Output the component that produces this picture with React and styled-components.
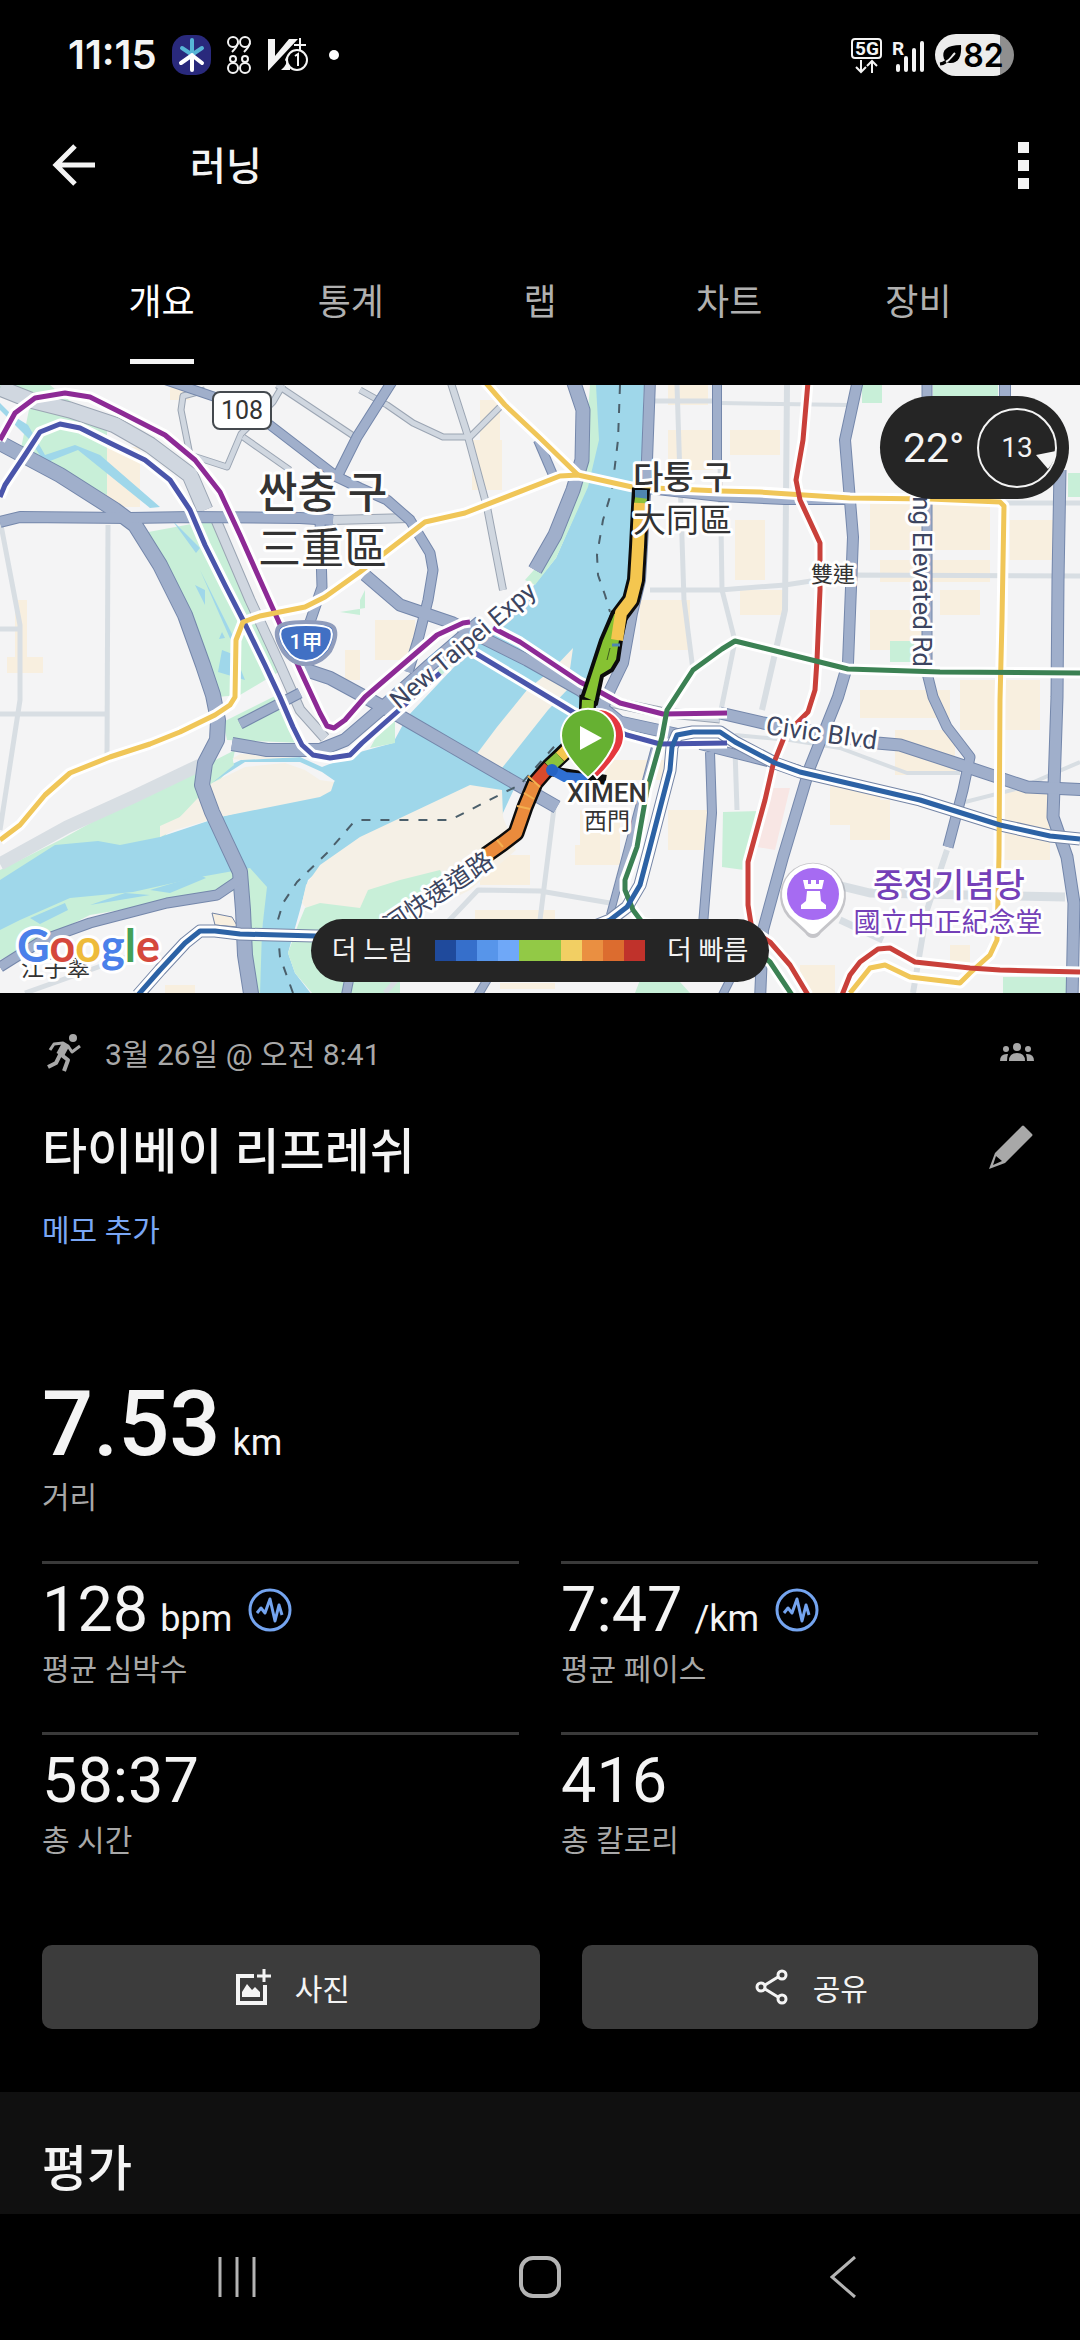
import React, { useState } from 'react';
import styled, { createGlobalStyle } from 'styled-components';

const GlobalStyle = createGlobalStyle`
  * {
    box-sizing: border-box;
  }
  body {
    margin: 0;
    background-color: #000;
    color: #f4f4f4;
    font-family: Roboto, 'Noto Sans CJK KR', sans-serif;
  }
  button {
    border: 0;
    padding: 0;
    background: none;
    color: inherit;
    font: inherit;
    cursor: pointer;
  }
  svg {
    display: block;
    flex-shrink: 0;
  }
`;

const Page = styled.div`
  display: flex;
  flex-direction: column;
  min-height: 100vh;
`;

const StatusBar = styled.div`
  display: flex;
  align-items: center;
  justify-content: space-between;
  height: 110px;
  padding: 0 66px 0 68px;
`;
const StatusGroup = styled.div`
  display: flex;
  align-items: center;
  gap: ${({ $gap }) => $gap}px;
`;
const Clock = styled.span`
  font-family: Inter, sans-serif;
  font-size: 40px;
  font-weight: 600;
  line-height: 42px;
`;
const Battery = styled.div`
  display: flex;
  align-items: center;
  justify-content: center;
  width: 79px;
  height: 42px;
  padding-right: 6px;
  border-radius: 21px;
  color: #000;
  background: linear-gradient(to right, #ececec 82%, #8f8f8f 82%);
  font-family: Inter, sans-serif;
  font-size: 32px;
  font-weight: 600;
`;

const AppBar = styled.header`
  display: flex;
  align-items: center;
  height: 110px;
  padding: 0 38px;
`;
const IconButton = styled.button`
  display: flex;
  align-items: center;
  justify-content: center;
  min-width: 38px;
  height: 72px;
`;
const AppTitle = styled.h1`
  flex: 1;
  margin: 4px 0 0 94px;
  font-size: 39px;
  font-weight: 500;
  line-height: 56px;
`;
const BackButton = styled(IconButton)`
  margin-left: 12px;
`;

const Tabs = styled.nav`
  display: grid;
  grid-template-columns: repeat(5, 1fr);
  height: 165px;
  padding: 0 67px;
`;
const Tab = styled.button`
  display: flex;
  flex-direction: column;
  align-items: center;
  justify-content: flex-end;
  gap: 28px;
  padding-bottom: 21px;
  font-size: 36px;
  line-height: 56px;
  color: ${({ $active }) => ($active ? '#fff' : '#b0b0b0')};
  &::after {
    content: '';
    width: 64px;
    height: 5px;
    background-color: ${({ $active }) => ($active ? '#f4f4f4' : 'transparent')};
  }
`;

const MapArea = styled.section`
  position: relative;
  height: 608px;
  overflow: hidden;
  background-color: #f4f4f5;
`;
const Canvas = styled.svg`
  width: 100%;
  height: 100%;
`;
const MapText = styled.text`
  font-family: Roboto, 'Noto Sans CJK TC', 'Noto Sans CJK KR', sans-serif;
  font-size: ${({ $size }) => $size}px;
  font-weight: ${({ $weight }) => $weight || 400};
  fill: ${({ $color }) => $color || '#333'};
  stroke: #fff;
  stroke-width: 6px;
  stroke-linejoin: round;
  paint-order: stroke;
`;
const PlainMapText = styled(MapText)`
  stroke: none;
`;
const Logo = styled(MapText)`
  font-family: Lato, sans-serif;
`;
const WeatherPill = styled.div`
  position: absolute;
  top: 11px;
  right: 11px;
  display: flex;
  align-items: center;
  justify-content: space-between;
  width: 189px;
  height: 103px;
  padding: 0 11px 0 23px;
  border-radius: 52px;
  background-color: #252525;
  font-size: 41px;
`;
const Wind = styled.div`
  display: grid;
  place-items: center;
  & > * {
    grid-area: 1 / 1;
  }
  font-size: 28px;
`;
const Legend = styled.div`
  position: absolute;
  bottom: 11px;
  left: 50%;
  transform: translateX(-50%);
  display: flex;
  align-items: center;
  justify-content: center;
  gap: 22px;
  width: 458px;
  height: 63px;
  border-radius: 32px;
  background-color: #252525;
  font-size: 27px;
  line-height: 40px;
  white-space: nowrap;
`;
const Scale = styled.div`
  display: flex;
  width: 210px;
  height: 21px;
`;
const Swatch = styled.span`
  flex: 1;
  background-color: ${({ $color }) => $color};
`;

const Summary = styled.main`
  padding: 0 42px;
`;
const MetaRow = styled.div`
  display: flex;
  align-items: center;
  justify-content: space-between;
  height: 118px;
  padding: 0 4px 0 0;
  color: #a8a8a8;
`;
const When = styled.div`
  display: flex;
  align-items: center;
  gap: 15px;
  font-size: 30px;
`;
const TitleRow = styled.div`
  display: flex;
  align-items: center;
  justify-content: space-between;
  height: 84px;
  padding: 0 4px 0 0;
`;
const SectionTitle = styled.h2`
  margin: 0;
  font-size: 49px;
  font-weight: 500;
  line-height: 72px;
`;
const MemoButton = styled.button`
  display: block;
  margin-top: 14px;
  font-size: 30px;
  line-height: 44px;
  color: #7aa7f5;
`;
const Distance = styled.div`
  height: 224px;
  margin-top: 84px;
  padding-top: 33px;
`;
const BigValue = styled.div`
  font-size: 90px;
  font-weight: 500;
  line-height: 110px;
`;
const Unit = styled.span`
  margin-left: 12px;
  font-size: 36px;
  font-weight: 400;
  line-height: 36px;
`;
const Label = styled.div`
  font-size: 30px;
  line-height: 36px;
  color: #a8a8a8;
`;
const Stats = styled.div`
  display: grid;
  grid-template-columns: 1fr 1fr;
  column-gap: 42px;
`;
const Stat = styled.div`
  height: 171px;
  padding-top: 10px;
  border-top: 3px solid #3a3a3a;
`;
const ValueRow = styled.div`
  display: flex;
  align-items: center;
  gap: 16px;
  height: 72px;
  margin-bottom: 6px;
`;
const Value = styled.div`
  font-size: 63px;
  line-height: 72px;
`;
const Actions = styled.div`
  display: grid;
  grid-template-columns: 12fr 11fr;
  gap: 42px;
  margin-top: 42px;
`;
const ActionButton = styled.button`
  display: flex;
  align-items: center;
  justify-content: center;
  gap: 23px;
  height: 84px;
  padding-left: 2px;
  border-radius: 10px;
  background-color: #3c3c3c;
  font-size: 30px;
`;
const Rating = styled.section`
  height: 122px;
  margin-top: 63px;
  padding: 42px 42px 0;
  background-color: #101010;
`;
const SystemNav = styled.nav`
  display: grid;
  grid-template-columns: repeat(3, 303px);
  justify-content: center;
  align-items: center;
  height: 126px;
  color: #b4b4b4;
`;

// [points, width]
const majorRoads = [
  ['0,443 60,475 115,510 135,525 160,565 185,615 203,665 213,695 218,720 217,740 205,763 202,785 212,812 225,840 240,872 243,910 245,955 252,1000', 14],
  ['0,522 20,517 130,518 190,517 300,518 333,520', 10],
  ['165,380 215,397 270,425 335,475 362,490', 8],
  ['393,380 357,437 337,477 360,488 387,500 410,520 430,553 433,570 428,600 418,640 408,672', 9],
  ['320,520 322,587 309,625', 9],
  ['365,575 400,605 453,623 527,660 580,690 620,722 680,735 720,746', 11],
  ['300,668 330,678 365,697 403,718 453,747 510,780 557,807', 12],
  ['573,380 583,410 582,460 573,490 555,535 535,570', 13],
  ['480,622 430,665 380,710 345,740 320,750 267,750 232,744', 12],
  ['240,724 300,693', 9],
  ['650,380 647,460 640,580 632,613 623,663 610,690 600,715', 10],
  ['717,380 717,460', 8],
  ['858,380 845,440 853,537 848,663 838,697 810,767 783,857 763,930 760,1000', 10],
  ['927,380 927,673 933,697 947,727 970,757 963,790 948,847', 9],
  ['1005,380 1005,440', 10],
  ['1060,470 1058,580 1057,697 1053,817 1067,857 1074,903 1072,1000', 11],
  ['630,487 720,497 785,500 850,500', 8],
  ['720,713 763,723 877,743 900,745 967,767 1027,787 1090,790', 11],
  ['700,745 800,770', 8],
  ['0,967 43,940 90,923 167,903 217,895 242,878', 9],
  ['710,752 712,813 703,925', 8],
  ['538,440 553,475', 8],
  ['655,747 610,915', 6],
  ['490,975 475,1000', 7],
  ['350,975 345,1000', 8],
  ['735,970 720,1000', 7],
];
const minorRoads = [
  ['0,388 30,400 70,410 115,425 150,445 190,475 205,510', 15],
  ['216,520 250,600 280,665 300,710 325,738', 9],
  ['205,390 183,396 181,410 190,455 227,467 241,434 273,402 283,385', 5],
  ['243,437 290,470', 5],
  ['277,385 355,437', 5],
  ['450,380 467,433 487,507 503,590', 6],
  ['360,390 387,405 413,423 443,437 470,437 500,407', 5],
  ['333,520 410,518', 8],
  ['600,700 660,712 720,718', 9],
];
const streets = [
  ['0,864 67,827 133,797 200,765', 13],
  ['0,520 20,625 20,700 0,830', 5],
  ['108,525 107,755', 5],
  ['0,629 20,629', 5],
  ['0,714 107,714', 5],
  ['677,385 684,600 693,670', 5],
  ['787,385 785,610 762,710', 6],
  ['654,401 712,401', 5],
  ['720,403 850,405', 4],
  ['650,590 720,590 785,585 850,575 1080,576', 5],
  ['1000,503 1080,503', 5],
  ['720,460 722,590 735,641 720,715', 5],
  ['555,800 540,920', 5],
  ['440,930 478,890 540,891 610,903', 5],
  ['735,750 737,810', 5],
  ['837,885 870,893 1065,897', 9],
  ['947,850 927,910 913,993', 6],
  ['840,920 883,940', 7],
  ['965,802 1020,788 1080,762', 4],
  ['735,735 790,740 840,748 907,773 960,773', 4],
  ['25,993 160,945', 5],
  ['385,993 405,970', 5],
];
const transit = [
  ['0,440 15,413 35,398 65,393 90,397 120,412 165,435 195,460 220,492 240,535 260,580 278,620 300,670 320,713 327,726 334,728 345,720 365,697 437,635 463,623 470,622', '#8d2a96'],
  ['493,628 520,642 580,682 600,692 620,703 663,714 727,713', '#8d2a96'],
  ['0,497 5,485 25,455 40,432 60,424 80,428 110,443 145,460 170,480 190,510 205,545 225,585 243,620 265,665 280,697 293,727 302,745 313,755 330,758 350,755 362,743 397,712 440,673', '#4a55ab'],
  ['475,653 520,680 573,712 627,735 660,744 727,743', '#4a55ab'],
  ['0,840 20,825 45,795 70,773 110,757 150,744 180,732 215,715 230,705 235,697 236,640 243,622 260,616 305,607 325,597 360,572 425,522 465,513 560,476 578,475 632,487 720,491 760,492 850,498 930,499 1000,502 1004,506 1002,620 1000,700 999,855 997,940 990,955 970,973 960,983 910,977 885,965 870,968 850,993', '#f0c658'],
  ['485,382 505,405 540,438 578,475', '#f0c658'],
  ['808,382 803,440 796,480 800,500 820,543 820,590 817,660 815,690 808,712 785,735 773,765 765,800 748,862 748,905 752,930 770,942 790,965 808,995', '#c9403a'],
  ['842,995 850,975 860,962 878,949 890,948 915,962 970,968 1000,970 1080,972', '#c9403a'],
  ['1080,673 940,672 848,669 735,641 722,649 693,670 680,690 667,710 662,737 647,790 637,847 625,880 625,890 633,910 642,922 700,935 750,945 770,962 792,995', '#3b8153'],
  ['138,995 160,970 185,943 200,931 215,931 240,934 315,936 560,940 610,920 627,907 640,885 650,847 670,770 672,747 677,735 693,732 720,732 735,742 775,763 800,772 920,800 1000,825 1050,836 1080,839', '#2c62a5'],
];
const blocks = [
  [170, 386, 20, 14], [100, 447, 40, 60], [472, 440, 30, 50], [15, 600, 12, 70], [7, 657, 36, 16],
  [480, 400, 20, 45], [640, 600, 50, 50], [668, 385, 40, 20], [668, 430, 45, 40], [730, 430, 50, 25],
  [735, 520, 30, 60], [870, 500, 120, 50], [880, 560, 110, 22], [740, 590, 45, 25], [870, 610, 60, 40],
  [940, 590, 40, 25], [1010, 520, 45, 40], [960, 680, 80, 50], [860, 690, 90, 28], [895, 730, 60, 45],
  [830, 785, 50, 40], [850, 800, 40, 40], [1000, 790, 50, 70], [580, 810, 40, 35], [480, 855, 50, 30],
  [605, 760, 60, 20], [668, 810, 40, 40], [575, 845, 45, 20], [475, 910, 80, 9], [345, 650, 15, 30],
  [375, 620, 40, 40], [800, 965, 35, 28], [950, 945, 20, 20], [165, 985, 30, 8], [500, 983, 55, 6],
];
const route = [
  ['641,490 641,500', '#4f86b0'],
  ['641,498 640,505', '#8cc23c'],
  ['640,503 638,547 636,580 631,600 621,613 617,640', '#f4c64f'],
  ['588,700 587,720', '#86c232'],
  ['572,745 560,757', '#f4c64f'],
  ['560,757 549,767', '#8cc23c'],
  ['549,767 535,783', '#d94a2b'],
  ['535,783 525,807 516,833 503,843 486,855', '#ea8b3c'],
];

const paceColors = [
  '#1f4a9c', '#366fcb', '#5795ea', '#6fa8f8', '#92c946',
  '#92c946', '#f2cf63', '#ea8f41', '#dc6c2f', '#c0322b',
];

const RouteMap = () => (
  <Canvas viewBox="0 385 1080 608" preserveAspectRatio="xMidYMid slice" lang="zh-Hant">
    <g fill="#f8efdf">
      {blocks.map(([x, y, w, h]) => (
        <rect key={`${x}-${y}`} x={x} y={y} width={w} height={h} />
      ))}
    </g>
    <g fill="#c8efd8">
      <path d="M0 385H50L62 395L107 428V495L60 478L20 453L30 405L0 390Z" />
      <path d="M143 533L213 520L240 577L282 670L240 695L217 697L197 640L167 570Z" />
      <path d="M223 722L277 695L302 743L227 740Z" />
      <path d="M60 840L123 805L192 772L235 750L232 765L212 790L180 817L160 842L60 852L0 885V870Z" />
      <path d="M0 925L70 890L200 860L272 858L268 890L262 930L262 993H250L240 890L90 915L0 960Z" />
      <path d="M360 615V600L365 590V608L340 612Z" />
      <path d="M862 385H882V403H862ZM933 385H998V400H933ZM1068 473H1080V497H1068ZM890 641H914V662H890Z" />
      <path d="M723 812L760 811L744 870L722 867ZM1003 977H1066V993H1003ZM635 993L640 980L680 982L690 993Z" />
    </g>
    <path d="M768 788H790L775 850L757 847Z" fill="#f8e6e4" />
    <g fill="#9fd7ea">
      <path d="M595 385H644L641 480L634 590L624 613L607 640L588 700L575 740L553 765L515 787L502 815L470 800L360 845L330 860L308 880L300 910L288 953L295 973L312 995H260L262 930L267 887L250 868L200 877L133 892L70 898L20 920L0 930V880L55 845L98 841L120 845L160 837L220 817L320 793L335 781L322 772L300 762L245 762L212 783L222 769L245 758L300 757L322 767L360 752L393 743L407 717L470 650L530 590L556 558L587 487L598 440Z" />
      <path d="M0 403L12 415L28 425L45 455L75 445L100 455L160 507L150 508L78 450L45 463L30 440L0 410Z" />
      <path d="M172 520L200 548L196 553ZM195 585L205 590V605ZM222 632L225 638L219 639ZM222 650L235 655L245 680L218 672ZM200 570L240 650L236 652Z" />
    </g>
    <g fill="#c8efd8">
      <path d="M590 385H596L599 440L588 487L556 558L535 585L525 580L550 552L582 485Z" />
      <path d="M460 658L420 695L395 720L395 743L370 748L383 725L440 668Z" />
    </g>
    <g fill="#f5f0e6">
      <path d="M573 648L555 667L527 690L497 727L470 763L502 768L548 710L567 690Z" />
      <path d="M180 817L212 783L245 767L285 763L305 770L320 780L334 782L331 791L320 797L220 817L175 830L160 837V826Z" />
      <path d="M302 903L306 885L320 865L360 837L470 785L502 790L503 817L516 850L470 890L400 925L320 925Z" />
      <path d="M242 760L232 759L240 754H300L302 757Z" />
    </g>
    <g fill="#c8efd8">
      <path d="M298 925L305 908L320 903L360 908L368 890L400 880L440 870L450 890L400 925V993H312L295 973L288 953Z" />
      <path d="M212 783L215 765L232 757L234 765Z" />
    </g>
    <path d="M90 905L125 893L150 895ZM150 890L200 875L206 878L170 893ZM30 918L65 903L68 910L40 924Z" fill="#9fd7ea" />
    <path d="M212 913L232 917L238 927L215 925Z" fill="#f8efdf" stroke="#7485a6" />

    <g fill="none" strokeLinejoin="round">
      {streets.map(([points, w]) => (
        <polyline key={points} points={points} stroke="#d8dee3" strokeWidth={w} />
      ))}
      {minorRoads.map(([points, w]) => (
        <polyline key={points} points={points} stroke="#9ba5b3" strokeWidth={w + 2} />
      ))}
      {minorRoads.map(([points, w]) => (
        <polyline key={points} points={points} stroke="#d0d7e0" strokeWidth={w} />
      ))}
      {majorRoads.map(([points, w]) => (
        <polyline key={points} points={points} stroke="#7487ab" strokeWidth={w + 2} />
      ))}
      {majorRoads.map(([points, w]) => (
        <polyline key={points} points={points} stroke="#a0afcb" strokeWidth={w} />
      ))}
      <g stroke="#4b5f6b" strokeWidth="2" strokeDasharray="9 10">
        <polyline points="620,385 618,440 612,490 603,520 597,555 598,575 605,595 610,612" />
        <polyline points="293,993 280,957 277,923 283,903 297,882 327,853 353,823 360,820 450,820 470,810 505,792 520,785 545,757 560,740" />
      </g>
      {transit.map(([points, color]) => (
        <React.Fragment key={points}>
          <polyline points={points} stroke="#7485a6" strokeWidth={color === '#2c62a5' ? 13 : 0} />
          <polyline points={points} stroke="#fff" strokeWidth="11" />
        </React.Fragment>
      ))}
      {transit.map(([points, color]) => (
        <polyline key={points} points={points} stroke={color} strokeWidth="5" />
      ))}
    </g>

    <MapText x="258" y="508" $size={43} $weight={500}>싼충 구</MapText>
    <MapText x="258" y="564" $size={43}>三重區</MapText>
    <MapText x="811" y="582" $size={22}>雙連</MapText>
    <MapText transform="translate(399 710) rotate(-40)" $size={25} $color="#3c4560">New Taipei Expy</MapText>
    <MapText transform="translate(913 667) rotate(90)" textAnchor="end" $size={26} $color="#3c4560">ng Elevated Rd</MapText>
    <MapText transform="translate(765 734) rotate(8)" $size={26} $color="#3c4560">Civic Blvd</MapText>

    <g fill="none" strokeLinejoin="round">
      <polyline
        points="641,488 638,547 636,580 631,600 619,616 612,640"
        stroke="#0c0c0c"
        strokeWidth="18"
      />
      <polyline
        points="588,695 587,720 572,745 549,767 535,783 525,807 516,833 503,843 486,855"
        stroke="#0c0c0c"
        strokeWidth="17"
      />
      <path d="M613 612L601 640L582 698L596 704L602 676L612 670L618 660L621 640L627 612Z" fill="#86c232" stroke="#0c0c0c" strokeWidth="4" />
      <polyline points="550,771 606,780" stroke="#0c0c0c" strokeWidth="10" />
      <polyline points="552,770 565,777 588,779" stroke="#2f6fd2" strokeWidth="10" />
      {route.map(([points, color]) => (
        <polyline key={points} points={points} stroke={color} strokeWidth="12" />
      ))}
      <path d="M612 645H620" stroke="#4f86b0" strokeWidth="3" />
      <path d="M610 648L607 660" stroke="#3c5a1c" strokeWidth="1" />
      <path d="M528 776L540 787M524 793L534 799M517 806L530 809M497 840L503 847" stroke="#f4b04f" strokeWidth="2" />
    </g>
    <circle cx="552" cy="770" r="6" fill="#2563c4" />
    <MapText x="633" y="489" $size={33} $weight={500}>다퉁 구</MapText>
    <MapText x="633" y="532" $size={33}>大同區</MapText>
    <MapText x="607" y="802" textAnchor="middle" $size={26} $weight={500}>XIMEN</MapText>
    <MapText x="607" y="829" textAnchor="middle" $size={23}>西門</MapText>
    <MapText transform="translate(495 865) rotate(-34)" textAnchor="end" $size={25} $color="#3c4560">河快速道路</MapText>

    <path d="M597 778L574 750A27 27 0 1 1 620 750Q610 766 597 778Z" fill="#e5383f" stroke="#fff" strokeWidth="2" />
    <path d="M588 778Q572 764 564 748A27 27 0 1 1 612 748Q604 764 588 778Z" fill="#66b132" stroke="#fff" strokeWidth="2" />
    <path d="M580 726V750L602 738Z" fill="#fff" />

    <path d="M813 938Q808 938 805 933L793 922A33 33 0 1 1 833 922L821 933Q818 938 813 938Z" fill="#8b8b94" opacity="0.45" />
    <path d="M813 934Q809 934 806 930L794 919A31 31 0 1 1 832 919L820 930Q817 934 813 934Z" fill="#fff" />
    <circle cx="813" cy="894" r="26" fill="#a66bf2" />
    <path d="M803 880H808V884H811V880H816V884H819V880H824L822 889H805ZM807 891H820L821 901L826 905V909H801V905L806 901Z" fill="#fff" />
    <MapText x="949" y="897" textAnchor="middle" $size={33} $weight={500} $color="#7440b8">중정기념당</MapText>
    <MapText x="948" y="932" textAnchor="middle" $size={27} $color="#7440b8">國立中正紀念堂</MapText>

    <rect x="213" y="392" width="58" height="37" rx="7" fill="#fff" stroke="#454a4f" strokeWidth="2" />
    <PlainMapText x="242" y="419" textAnchor="middle" $size={25}>108</PlainMapText>
    <path d="M278 628Q281 622 306 622Q331 622 334 628Q338 636 330 651Q320 664 306 664Q292 664 283 651Q274 636 278 628Z" fill="#4170c4" stroke="#8f9cbc" strokeWidth="4" />
    <path d="M281 630Q284 625 306 625Q328 625 331 630Q334 637 327 649Q318 661 306 661Q294 661 286 649Q278 637 281 630Z" fill="none" stroke="#fff" strokeWidth="2" />
    <PlainMapText x="306" y="649" textAnchor="middle" $size={21} $weight={500} $color="#fff">1甲</PlainMapText>

    <MapText x="21" y="976" $size={23}>江子翠</MapText>
    <Logo x="17" y="962" $size={45} $weight={700}>
      <tspan fill="#4a80ea">G</tspan>
      <tspan fill="#d5483c">o</tspan>
      <tspan fill="#eebb3a">o</tspan>
      <tspan fill="#4a80ea">g</tspan>
      <tspan fill="#43a158">l</tspan>
      <tspan fill="#d5483c">e</tspan>
    </Logo>
  </Canvas>
);

const PulseIcon = () => (
  <svg width="45" height="45" viewBox="0 0 45 45" fill="none" stroke="#74a4ef">
    <circle cx="22" cy="22" r="20" strokeWidth="3" />
    <path d="M9 25L13 20L17 25L22 11L27 33L31 17L34 27" strokeWidth="3" strokeLinejoin="round" />
  </svg>
);

const tabs = ['개요', '통계', '랩', '차트', '장비'];
const stats = [
  { value: '128', unit: 'bpm', label: '평균 심박수', pulse: true },
  { value: '7:47', unit: '/km', label: '평균 페이스', pulse: true },
  { value: '58:37', label: '총 시간' },
  { value: '416', label: '총 칼로리' },
];

const App = () => {
  const [activeTab, setActiveTab] = useState('개요');
  return (
    <Page lang="ko">
      <GlobalStyle />
      <StatusBar>
        <StatusGroup $gap={15}>
          <Clock>11:15</Clock>
          <svg width="39" height="40" viewBox="0 0 39 40" strokeLinecap="round" fill="none">
            <rect width="39" height="40" rx="15" fill="#29297c" />
            <path d="M20 5V18M10 13L19 19M30 13L21 19" stroke="#57b5d6" strokeWidth="4" />
            <path d="M20 20V35M19 21L9 28M21 21L30 28" stroke="#fff" strokeWidth="4" />
          </svg>
          <svg width="26" height="40" viewBox="0 0 26 40" fill="none" stroke="#f4f4f4" strokeWidth="2">
            <circle cx="7" cy="7" r="5" />
            <circle cx="19" cy="7" r="5" />
            <path d="M12 8Q11 12 6 17M24 8Q23 12 18 17" />
            <circle cx="7" cy="24" r="3" />
            <circle cx="19" cy="24" r="3" />
            <circle cx="7" cy="33" r="5" />
            <circle cx="19" cy="33" r="5" />
          </svg>
          <svg width="42" height="36" viewBox="0 0 42 36">
            <path d="M1 2H8V19L22 2H31L1 34Z" fill="#f4f4f4" />
            <path d="M14 33Q22 26 18 23Q20 17 23 19V33Z" fill="#f4f4f4" />
            <path d="M33 1V14M27 8H39" stroke="#f4f4f4" strokeWidth="2" />
            <circle cx="30" cy="23" r="10" fill="#000" stroke="#f4f4f4" strokeWidth="2" />
            <path d="M28 19L31 17V29" fill="none" stroke="#f4f4f4" strokeWidth="2" />
          </svg>
          <svg width="22" height="10" viewBox="0 0 22 10">
            <circle cx="10" cy="5" r="5" fill="#fff" />
          </svg>
        </StatusGroup>
        <StatusGroup $gap={9}>
          <svg width="32" height="37" viewBox="0 0 32 37" fill="none" stroke="#f4f4f4">
            <rect x="1" y="2" width="29" height="19" rx="3" strokeWidth="2" />
            <text x="16" y="18" textAnchor="middle" fill="#f4f4f4" stroke="none" fontSize="19" fontWeight="700">5G</text>
            <path d="M10 23V35M5 30L10 35L15 30M21 36V24M16 29L21 24L26 29" strokeWidth="2" />
          </svg>
          <svg width="34" height="36" viewBox="0 0 34 36">
            <text x="0" y="18" fill="#f4f4f4" fontSize="19" fontWeight="700">R</text>
            <path d="M6 29V33M14 21V33M22 13V33M30 6V33" stroke="#f4f4f4" strokeWidth="4" strokeLinecap="round" />
          </svg>
          <Battery>
            <svg width="24" height="22" viewBox="0 0 24 22">
              <path d="M5 15C2 6 8 1 22 1C23 13 19 20 10 19L8 18Z" fill="#000" />
              <path d="M1 20C8 19 11 14 16 9" fill="none" stroke="#000" strokeWidth="3" />
              <path d="M7 18C11 16 12 13 16 9" fill="none" stroke="#ececec" strokeWidth="2" />
            </svg>
            82
          </Battery>
        </StatusGroup>
      </StatusBar>

      <AppBar>
        <BackButton aria-label="뒤로">
          <svg width="46" height="44" viewBox="0 0 46 44" fill="none" stroke="#f4f4f4" strokeWidth="5">
            <path d="M45 22H6M25 3L6 22L25 41" />
          </svg>
        </BackButton>
        <AppTitle>러닝</AppTitle>
        <IconButton aria-label="더보기">
          <svg width="11" height="47" viewBox="0 0 11 47" fill="#f4f4f4">
            <rect width="11" height="11" />
            <rect y="18" width="11" height="11" />
            <rect y="36" width="11" height="11" />
          </svg>
        </IconButton>
      </AppBar>

      <Tabs>
        {tabs.map((tab) => (
          <Tab key={tab} $active={tab === activeTab} onClick={() => setActiveTab(tab)}>
            {tab}
          </Tab>
        ))}
      </Tabs>

      <MapArea>
        <RouteMap />
        <WeatherPill>
          22°
          <Wind>
            <svg width="82" height="82" viewBox="0 0 82 82">
              <circle cx="41" cy="41" r="39" fill="none" stroke="#f4f4f4" strokeWidth="2" />
              <path d="M60 48L80 44Q79 54 72 62Z" fill="#f4f4f4" />
            </svg>
            <span>13</span>
          </Wind>
        </WeatherPill>
        <Legend>
          더 느림
          <Scale>
            {paceColors.map((color, i) => (
              <Swatch key={i} $color={color} />
            ))}
          </Scale>
          더 빠름
        </Legend>
      </MapArea>

      <Summary>
        <MetaRow>
          <When>
            <svg width="48" height="48" viewBox="0 0 48 48" fill="none" stroke="#a8a8a8" strokeWidth="3">
              <circle cx="31" cy="10" r="4" fill="#a8a8a8" stroke="none" />
              <path d="M8 22L12 16L21 15L26 18L30 24L38 18" strokeLinejoin="round" />
              <path d="M24 16L18 27" strokeWidth="8" />
              <path d="M17 25L26 32L22 43M18 27L14 35L6 39" strokeWidth="4" strokeLinejoin="round" />
            </svg>
            3월 26일 @ 오전 8:41
          </When>
          <svg width="34" height="20" viewBox="0 0 34 20" fill="#a8a8a8">
            <circle cx="17" cy="5" r="4" />
            <circle cx="6" cy="7" r="3" />
            <circle cx="28" cy="7" r="3" />
            <path d="M9 19Q9 11 17 11Q25 11 25 19ZM0 19Q0 12 7 12H8Q7 15 7 19ZM34 19Q34 12 27 12H26Q27 15 27 19Z" />
          </svg>
        </MetaRow>
        <TitleRow>
          <SectionTitle>타이베이 리프레쉬</SectionTitle>
          <IconButton aria-label="이름 편집">
            <svg width="46" height="58" viewBox="0 0 46 58" fill="#a8a8a8">
              <path d="M1 45L7 29L34 2Q35 1 36 2L44 10Q45 11 44 12L17 39ZM5 41L14 37L8 32Z" fillRule="evenodd" />
            </svg>
          </IconButton>
        </TitleRow>
        <MemoButton>메모 추가</MemoButton>

        <Distance>
          <BigValue>
            7.53<Unit>km</Unit>
          </BigValue>
          <Label>거리</Label>
        </Distance>

        <Stats>
          {stats.map(({ value, unit, label, pulse }) => (
            <Stat key={label}>
              <ValueRow>
                <Value>
                  {value}
                  {unit && <Unit>{unit}</Unit>}
                </Value>
                {pulse && <PulseIcon />}
              </ValueRow>
              <Label>{label}</Label>
            </Stat>
          ))}
        </Stats>

        <Actions>
          <ActionButton>
            <svg width="38" height="38" viewBox="0 0 38 38" fill="none" stroke="#f4f4f4" strokeWidth="4">
              <path d="M20 8H4V35H31V17" />
              <path d="M30 1V14M23 8H37" strokeWidth="3" />
              <path d="M8 29V24L13 16L18 22L21 19L26 24V29Z" fill="#f4f4f4" stroke="none" />
            </svg>
            사진
          </ActionButton>
          <ActionButton>
            <svg width="36" height="38" viewBox="0 0 36 38" fill="none" stroke="#f4f4f4" strokeWidth="3">
              <circle cx="28" cy="7" r="4" />
              <circle cx="7" cy="19" r="4" />
              <circle cx="28" cy="31" r="4" />
              <path d="M11 17L24 9M11 21L24 29" />
            </svg>
            공유
          </ActionButton>
        </Actions>
      </Summary>

      <Rating>
        <SectionTitle as="h3">평가</SectionTitle>
      </Rating>

      <SystemNav>
        <IconButton aria-label="최근 앱">
          <svg width="40" height="42" viewBox="0 0 40 42" stroke="#b4b4b4" strokeWidth="3">
            <path d="M3 1V41M20 1V41M37 1V41" />
          </svg>
        </IconButton>
        <IconButton aria-label="홈">
          <svg width="42" height="42" viewBox="0 0 42 42" fill="none" stroke="#b4b4b4" strokeWidth="4">
            <rect x="2" y="2" width="38" height="38" rx="12" />
          </svg>
        </IconButton>
        <IconButton aria-label="뒤로">
          <svg width="26" height="42" viewBox="0 0 26 42" fill="none" stroke="#b4b4b4" strokeWidth="3">
            <path d="M25 1L2 21L25 41" />
          </svg>
        </IconButton>
      </SystemNav>
    </Page>
  );
};

export default App;
